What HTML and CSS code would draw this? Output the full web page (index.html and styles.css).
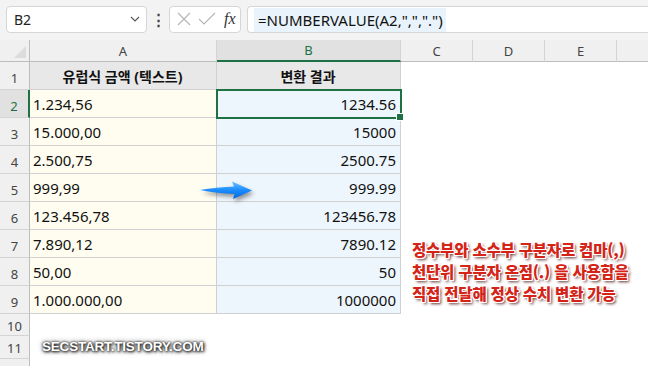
FILE: index.html
```html
<!DOCTYPE html>
<html lang="ko">
	<head>
		<meta charset="UTF-8">
		<title>NUMBERVALUE</title>
		<link rel="stylesheet" href="styles.css">
	</head>
	<body>
		<!-- 수식 입력줄 -->
		<div class="toolbar">
			<div class="namebox">
				<span>B2</span>
				<svg width="10" height="6" viewBox="0 0 10 6"><path d="M1 1 L5 5 L9 1" fill="none" stroke="#555" stroke-width="1.1"/></svg>
			</div>
			<div class="dots">&#8942;</div>
			<div class="fxbox">
				<svg width="16" height="16" viewBox="0 0 16 16"><path d="M2 2 L14 14 M14 2 L2 14" stroke="#b4b4b4" stroke-width="1.1"/></svg>
				<svg width="18" height="16" viewBox="0 0 18 16"><path d="M1 8 L6 13 L17 2" fill="none" stroke="#b4b4b4" stroke-width="1.1"/></svg>
				<span class="fx">fx</span>
			</div>
			<div class="formula"><span class="sel">=NUMBERVALUE(A2,",",".")</span></div>
		</div>

		<!-- 시트 -->
		<div class="sheet">
			<div class="corner"></div>
			<div class="colhead">A</div>
			<div class="colhead active">B</div>
			<div class="colhead">C</div>
			<div class="colhead">D</div>
			<div class="colhead">E</div>
			<div class="colhead last"></div>

			<div class="rowhead">1</div>
			<div class="cell title">유럽식 금액 (텍스트)</div>
			<div class="cell title">변환 결과</div>
			<div class="blank"></div>

			<div class="rowhead active">2</div>
			<div class="cell src">1.234,56</div>
			<div class="cell num selected">1234.56<i class="handle"></i></div>
			<div class="blank"></div>

			<div class="rowhead">3</div>
			<div class="cell src">15.000,00</div>
			<div class="cell num">15000</div>
			<div class="blank"></div>

			<div class="rowhead">4</div>
			<div class="cell src">2.500,75</div>
			<div class="cell num">2500.75</div>
			<div class="blank"></div>

			<div class="rowhead">5</div>
			<div class="cell src">999,99</div>
			<div class="cell num">999.99</div>
			<div class="blank"></div>

			<div class="rowhead">6</div>
			<div class="cell src">123.456,78</div>
			<div class="cell num">123456.78</div>
			<div class="blank"></div>

			<div class="rowhead">7</div>
			<div class="cell src">7.890,12</div>
			<div class="cell num">7890.12</div>
			<div class="blank"></div>

			<div class="rowhead">8</div>
			<div class="cell src">50,00</div>
			<div class="cell num">50</div>
			<div class="blank"></div>

			<div class="rowhead">9</div>
			<div class="cell src">1.000.000,00</div>
			<div class="cell num">1000000</div>
			<div class="blank"></div>

			<div class="rowhead small">10</div>
			<div class="blank wide"></div>
			<div class="rowhead small">11</div>
			<div class="blank wide"></div>
			<div class="rowhead tail"></div>
			<div class="blank wide"></div>
		</div>

		<!-- 화살표 -->
		<svg class="arrow" width="60" height="24" viewBox="0 0 60 24">
			<defs>
				<linearGradient id="ag" x1="0" y1="0" x2="0" y2="1">
					<stop offset="0" stop-color="#6cc0ff"/>
					<stop offset="0.5" stop-color="#1a8cff"/>
					<stop offset="1" stop-color="#0466d8"/>
				</linearGradient>
			</defs>
			<path d="M1 11 C12 9 24 8 35 7.5 L33 2.5 L53 11.5 L34 20 L35.5 15 C24 14.5 12 13.5 1 11 Z" fill="url(#ag)"/>
		</svg>

		<!-- 설명 -->
		<div class="note">
			<p>정수부와 소수부 구분자로 컴마(,)</p>
			<p>천단위 구분자 온점(.) 을 사용함을</p>
			<p>직접 전달해 정상 수치 변환 가능</p>
		</div>

		<div class="mark">SECSTART.TISTORY.COM</div>
	</body>
</html>
```
FILE: styles.css
```css
/* 기본 */
html,
body {
	margin: 0;
	height: 100%;
	overflow: hidden;
	background: #fff;
	font-family: "Noto Sans", "Noto Sans CJK KR", sans-serif;
	color: #111;
}

/* 수식 입력줄 */
.toolbar {
	display: flex;
	align-items: center;
	height: 40px;
	padding: 0 0 2px 6px;
	box-sizing: border-box;
	background: #f3f3f3;
}

.namebox {
	display: flex;
	align-items: center;
	justify-content: space-between;
	width: 141px;
	height: 27px;
	box-sizing: border-box;
	padding: 0 6px 0 7px;
	background: #fff;
	border: 1px solid #d6d6d6;
	border-radius: 4px;
	font-size: 14px;
	color: #222;
}

.dots {
	width: 22px;
	text-align: center;
	font-size: 15px;
	color: #444;
	font-weight: bold;
}

.fxbox {
	display: flex;
	align-items: center;
	gap: 6px;
	width: 72px;
	height: 27px;
	box-sizing: border-box;
	padding: 0 0 0 6px;
	background: #fff;
	border: 1px solid #d6d6d6;
	border-radius: 4px;
}

.fx {
	font-family: "Liberation Serif", serif;
	font-style: italic;
	font-size: 16px;
	color: #333;
	margin-left: 2px;
}

.formula {
	flex: 1;
	height: 27px;
	margin-left: 6px;
	box-sizing: border-box;
	padding: 1px 0 0 6px;
	background: #fff;
	border: 1px solid #d6d6d6;
	border-right: none;
	border-radius: 4px 0 0 4px;
	display: flex;
	align-items: stretch;
}

.formula .sel {
	display: flex;
	align-items: center;
	padding: 0 3px 0 4px;
	background: #e8f3fc;
	font-size: 15px;
	color: #111;
}

/* 시트 */
.sheet {
	display: grid;
	grid-template-columns: 30px 187px 184px 72px 72px 72px 1fr;
	grid-template-rows: 22px repeat(9, 28px) 22px 23px 8px;
}

.corner {
	background: #f0f0f0;
	border-right: 1px solid #bdbdbd;
	border-bottom: 1px solid #bdbdbd;
	position: relative;
}

.corner::after {
	content: "";
	position: absolute;
	right: 3px;
	bottom: 3px;
	border-left: 12px solid transparent;
	border-bottom: 12px solid #dcdcdc;
}

.colhead {
	background: #f0f0f0;
	border-right: 1px solid #d4d4d4;
	border-bottom: 1px solid #bdbdbd;
	font-size: 13px;
	color: #444;
	display: flex;
	align-items: center;
	justify-content: center;
}

.colhead.active {
	background: #e1e1e1;
	color: #1e7145;
	border-bottom: 2px solid #1e7145;
}

.colhead.last {
	border-right: none;
}

.rowhead {
	background: #f0f0f0;
	border-right: 1px solid #bdbdbd;
	border-bottom: 1px solid #d4d4d4;
	font-size: 13px;
	color: #444;
	display: flex;
	align-items: center;
	justify-content: center;
	padding-top: 5px;
	box-sizing: border-box;
}

.rowhead.small {
	padding-top: 2px;
}

.rowhead.tail {
	border-bottom: none;
}

.rowhead.active {
	background: #e1e1e1;
	color: #1e7145;
	border-right: 2px solid #1e7145;
}

.cell {
	display: flex;
	align-items: center;
	padding: 0 4px 0 3px;
	border-right: 1px solid #d0d0d0;
	border-bottom: 1px solid #d0d0d0;
	font-size: 15px;
	white-space: nowrap;
	position: relative;
}

.cell.title {
	justify-content: center;
	background: #e8e8e8;
	font-weight: bold;
	font-size: 14px;
}

.cell.src {
	background: #fffdf0;
}

.cell.num {
	justify-content: flex-end;
	background: #eef6fd;
}

/* 선택된 셀 */
.cell.selected {
	outline: 2px solid #1e7145;
	outline-offset: -1px;
	z-index: 1;
}

.handle {
	position: absolute;
	right: -4px;
	bottom: -4px;
	width: 6px;
	height: 6px;
	background: #1e7145;
	border: 1px solid #fff;
}

.blank {
	grid-column: 4 / 8;
}

.blank.wide {
	grid-column: 2 / 8;
}

/* 화살표 */
.arrow {
	position: absolute;
	left: 199px;
	top: 179px;
	filter: drop-shadow(2px 3px 2px rgba(0, 0, 0, 0.4));
}

/* 설명 */
.note {
	position: absolute;
	left: 412px;
	top: 238px;
	font-family: "Noto Sans CJK KR", sans-serif;
	font-weight: 900;
	font-size: 15.5px;
	line-height: 22px;
	letter-spacing: -0.2px;
	color: #d42418;
	text-shadow: -1px 0 #fff, 1px 0 #fff, 0 -1px #fff, 0 1px #fff, -1px -1px #fff, 1px 1px #fff, 1px -1px #fff, -1px 1px #fff, 2px 2px 3px rgba(60, 0, 0, 0.9);
}

.note p {
	margin: 0;
}

.mark {
	position: absolute;
	left: 42px;
	top: 339px;
	font-family: "Liberation Sans", sans-serif;
	font-weight: bold;
	font-size: 13.5px;
	letter-spacing: -0.2px;
	color: #fff;
	text-shadow: 0 0 2px #222, 1px 1px 3px #111, 0 0 5px #444;
}
```
